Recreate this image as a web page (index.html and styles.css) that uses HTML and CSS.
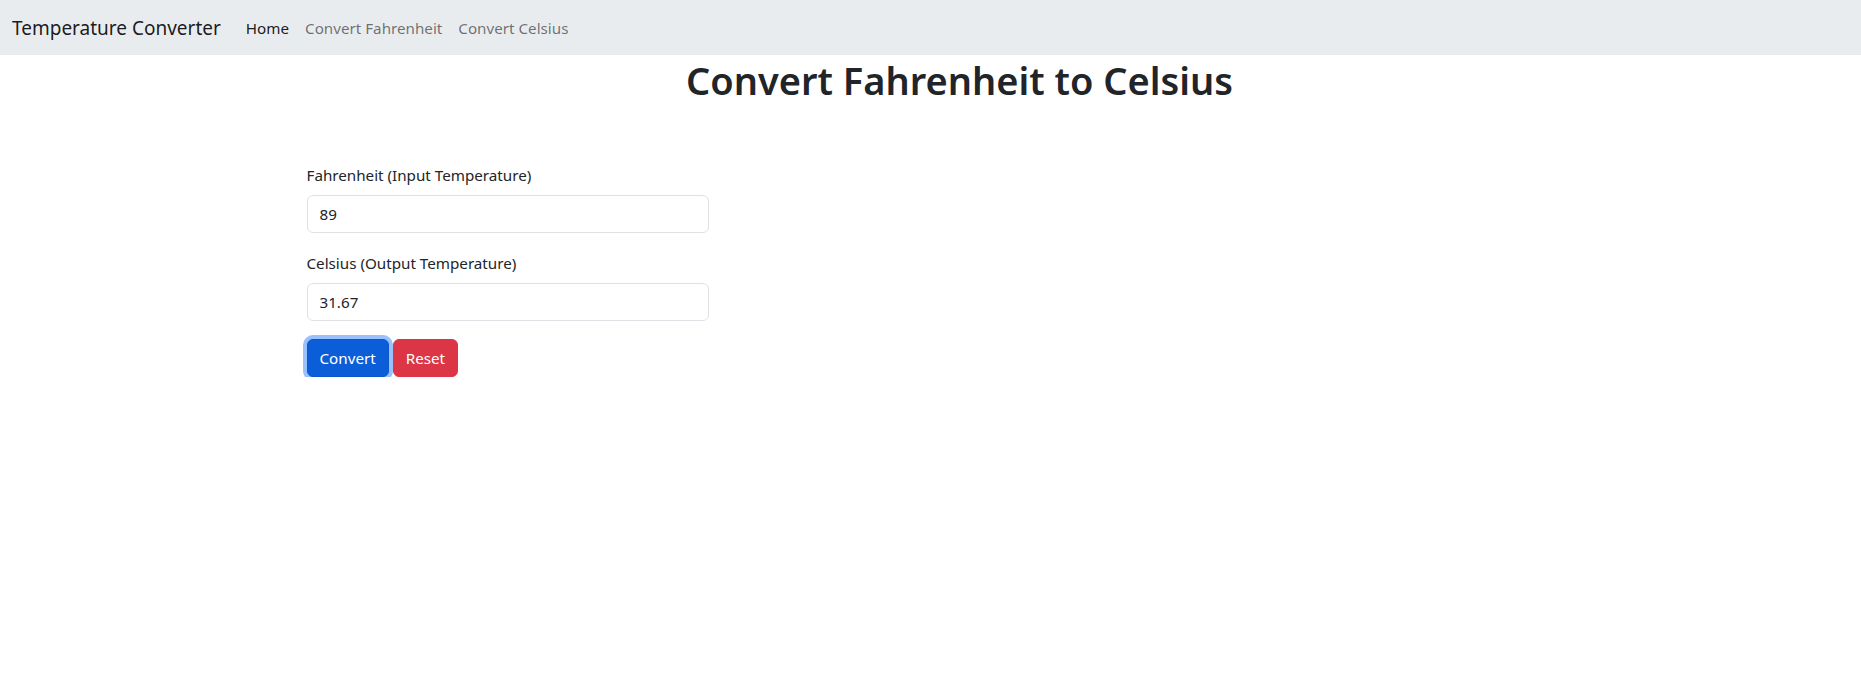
FILE: index.html
```html
<!DOCTYPE html>
<html lang="en">
<head>
<meta charset="utf-8">
<title>Temperature Converter</title>
<link rel="stylesheet" href="styles.css">
</head>
<body>
<nav class="navbar">
  <a class="brand" href="#">Temperature Converter</a>
  <ul class="nav">
    <li><a class="nav-link active" href="#">Home</a></li>
    <li><a class="nav-link" href="#">Convert Fahrenheit</a></li>
    <li><a class="nav-link" href="#">Convert Celsius</a></li>
  </ul>
</nav>
<main>
  <h1 class="title">Convert Fahrenheit to Celsius</h1>
  <div class="container">
    <form class="form">
      <div class="group">
        <label class="label" for="f">Fahrenheit (Input Temperature)</label>
        <input class="control" id="f" type="text" value="89">
      </div>
      <div class="group">
        <label class="label" for="c">Celsius (Output Temperature)</label>
        <input class="control" id="c" type="text" value="31.67">
      </div>
      <div class="buttons">
        <button type="button" class="btn btn-primary focus">Convert</button>
        <button type="reset" class="btn btn-danger">Reset</button>
      </div>
    </form>
  </div>
</main>
</body>
</html>
```
FILE: styles.css
```css
* { box-sizing: border-box; }
body {
  margin: 0;
  font-family: "Noto Sans", "Open Sans", sans-serif;
  font-size: 15.2px;
  line-height: 24px;
  color: #212529;
  background: #fff;
}
.navbar {
  display: flex;
  align-items: center;
  height: 55px;
  padding: 0 12px;
  background: #e9ecef;
}
.brand {
  font-size: 19px;
  color: rgba(0,0,0,.9);
  text-decoration: none;
  margin-right: 17px;
  line-height: 30px;
}
.nav {
  display: flex;
  list-style: none;
  margin: 0;
  padding: 0;
}
.nav-link {
  display: block;
  padding: 8px 8px;
  color: rgba(0,0,0,.55);
  text-decoration: none;
}
.nav-link.active { color: rgba(0,0,0,.9); }
.title {
  margin: 1px 0 0;
  padding-left: 58px;
  text-align: center;
  font-size: 38px;
  font-weight: 600;
  line-height: 48px;
}
.container {
  max-width: 1320px;
  margin: 0 auto;
  padding: 0 12px;
}
.form {
  width: 402px;
  margin-left: 24px;
  margin-top: 59px;
}
.group { margin-bottom: 18px; }
.label {
  display: block;
  margin-bottom: 8px;
  line-height: 24px;
}
.control {
  display: block;
  width: 100%;
  height: 38px;
  padding: 6px 12px;
  font: inherit;
  color: #212529;
  border: 1px solid #dee2e6;
  border-radius: 6px;
  background: #fff;
}
.buttons { display: flex; gap: 4px; }
.btn {
  font: inherit;
  line-height: 24px;
  padding: 6px 12px;
  border: 1px solid transparent;
  border-radius: 6px;
  color: #fff;
  cursor: pointer;
}
.btn-primary { background: #0b5ed7; border-color: #0a58ca; }
.btn-primary.focus { box-shadow: 0 0 0 4px rgba(49,132,253,.5); }
.btn-danger { background: #dc3545; border-color: #dc3545; }
```
